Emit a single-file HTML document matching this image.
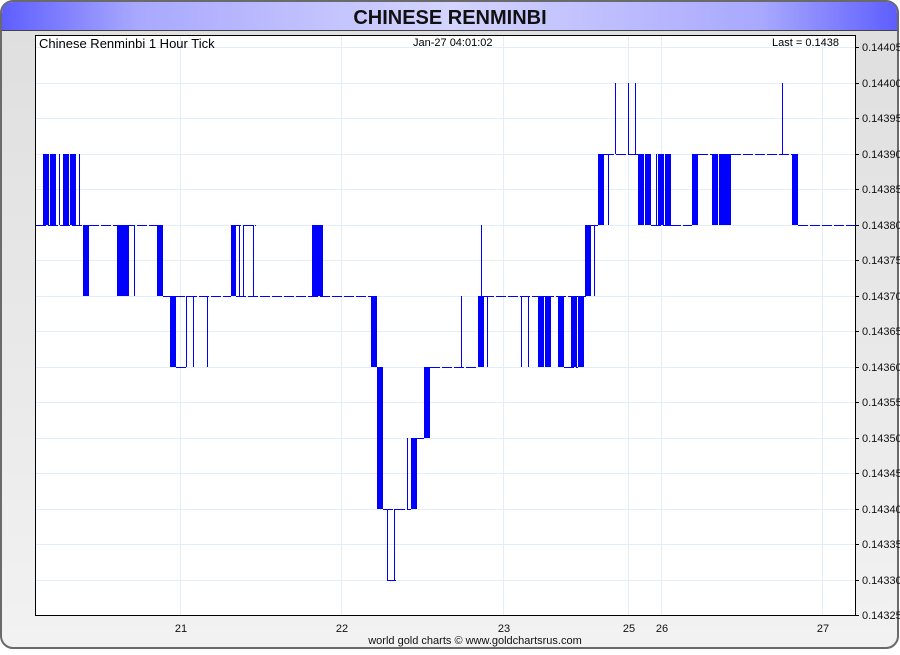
<!DOCTYPE html>
<html><head><style>
body{margin:0;width:900px;height:650px;overflow:hidden;background:#fff;font-family:"Liberation Sans",sans-serif}
</style></head><body>
<svg width="900" height="650" xmlns="http://www.w3.org/2000/svg" font-family="Liberation Sans, sans-serif">
<defs>
<linearGradient id="tb" x1="0" x2="1" y1="0" y2="0">
<stop offset="0" stop-color="#5e5eff"/><stop offset="0.15" stop-color="#a8a8ff"/><stop offset="0.5" stop-color="#d4d4ff"/><stop offset="0.85" stop-color="#a8a8ff"/><stop offset="1" stop-color="#5e5eff"/>
</linearGradient>
<linearGradient id="bg" x1="0" x2="0" y1="0" y2="1">
<stop offset="0" stop-color="#dedede"/><stop offset="1" stop-color="#f2f2f2"/>
</linearGradient>
</defs>
<rect x="1" y="1" width="897" height="647" rx="12" fill="url(#bg)" stroke="#6a6a6a" stroke-width="2"/>
<path d="M2 30 V14 Q2 2 14 2 H886 Q897 2 897 14 V30 Z" fill="url(#tb)"/>
<line x1="2" y1="30.5" x2="897" y2="30.5" stroke="#444" stroke-width="1"/>
<text x="450" y="24" text-anchor="middle" font-size="20" font-weight="bold" fill="#111">CHINESE RENMINBI</text>
<rect x="35.5" y="35.5" width="820" height="580" fill="#fff" stroke="#000" stroke-width="1"/>
<g stroke="#e2eef8" stroke-width="1">
<line x1="36" x2="855" y1="47.5" y2="47.5"/><line x1="36" x2="855" y1="83.5" y2="83.5"/><line x1="36" x2="855" y1="118.5" y2="118.5"/><line x1="36" x2="855" y1="154.5" y2="154.5"/><line x1="36" x2="855" y1="189.5" y2="189.5"/><line x1="36" x2="855" y1="225.5" y2="225.5"/><line x1="36" x2="855" y1="260.5" y2="260.5"/><line x1="36" x2="855" y1="296.5" y2="296.5"/><line x1="36" x2="855" y1="331.5" y2="331.5"/><line x1="36" x2="855" y1="367.5" y2="367.5"/><line x1="36" x2="855" y1="402.5" y2="402.5"/><line x1="36" x2="855" y1="438.5" y2="438.5"/><line x1="36" x2="855" y1="473.5" y2="473.5"/><line x1="36" x2="855" y1="509.5" y2="509.5"/><line x1="36" x2="855" y1="544.5" y2="544.5"/><line x1="36" x2="855" y1="580.5" y2="580.5"/>
<line x1="180.5" x2="180.5" y1="36" y2="615"/><line x1="341.5" x2="341.5" y1="36" y2="615"/><line x1="503.5" x2="503.5" y1="36" y2="615"/><line x1="628.5" x2="628.5" y1="36" y2="615"/><line x1="661.5" x2="661.5" y1="36" y2="615"/><line x1="822.5" x2="822.5" y1="36" y2="615"/>
</g>
<text x="39" y="48" font-size="13" fill="#000">Chinese Renminbi 1 Hour Tick</text>
<text x="413" y="46" font-size="11" fill="#000">Jan-27  04:01:02</text>
<text x="772" y="46" font-size="11" fill="#000">Last = 0.1438</text>
<g fill="#0000ff">
<rect x="43" y="154" width="6" height="71"/><rect x="50" y="154" width="6" height="71"/><rect x="59" y="154" width="1" height="71"/><rect x="63" y="154" width="6" height="71"/><rect x="70" y="154" width="6" height="71"/><rect x="79" y="154" width="1" height="71"/>
<rect x="83" y="225" width="6" height="71"/><rect x="117" y="225" width="12" height="71"/><rect x="134" y="225" width="1" height="71"/><rect x="157" y="225" width="6" height="71"/>
<rect x="231" y="225" width="5" height="71"/><rect x="239" y="225" width="1" height="71"/><rect x="243" y="225" width="1" height="71"/><rect x="253" y="225" width="1" height="71"/><rect x="312" y="225" width="11" height="71"/>
<rect x="170" y="296" width="6" height="71"/><rect x="186" y="296" width="1" height="71"/><rect x="193" y="296" width="1" height="71"/><rect x="207" y="296" width="1" height="71"/>
<rect x="371" y="296" width="6" height="71"/>
<rect x="377" y="367" width="6" height="142"/>
<rect x="387" y="509" width="1" height="71"/><rect x="394" y="509" width="1" height="71"/>
<rect x="407" y="438" width="1" height="71"/><rect x="411" y="438" width="6" height="71"/>
<rect x="424" y="367" width="6" height="71"/>
<rect x="461" y="296" width="1" height="71"/><rect x="478" y="296" width="6" height="71"/><rect x="487" y="296" width="1" height="71"/><rect x="481" y="225" width="1" height="71"/>
<rect x="521" y="296" width="1" height="71"/><rect x="528" y="296" width="1" height="71"/>
<rect x="538" y="296" width="6" height="71"/><rect x="545" y="296" width="6" height="71"/><rect x="558" y="296" width="6" height="71"/><rect x="571" y="296" width="6" height="71"/><rect x="578" y="296" width="6" height="71"/>
<rect x="585" y="225" width="6" height="71"/><rect x="594" y="225" width="1" height="71"/>
<rect x="598" y="154" width="6" height="71"/><rect x="608" y="154" width="1" height="71"/>
<rect x="615" y="83" width="1" height="71"/><rect x="628" y="83" width="1" height="71"/><rect x="635" y="83" width="1" height="71"/>
<rect x="638" y="154" width="6" height="71"/><rect x="645" y="154" width="6" height="71"/><rect x="656" y="154" width="1" height="71"/><rect x="658" y="154" width="6" height="71"/><rect x="665" y="154" width="6" height="71"/>
<rect x="692" y="154" width="6" height="71"/><rect x="712" y="154" width="6" height="71"/><rect x="719" y="154" width="12" height="71"/>
<rect x="782" y="83" width="1" height="71"/><rect x="792" y="154" width="6" height="71"/>
</g>
<g stroke="#0000ff" stroke-width="1" stroke-dasharray="10,2">
<line x1="36" x2="83" y1="225.5" y2="225.5"/><line x1="89" x2="157" y1="225.5" y2="225.5"/>
<line x1="163" x2="231" y1="296.5" y2="296.5"/><line x1="176" x2="188" y1="367.5" y2="367.5"/>
<line x1="231" x2="256" y1="225.5" y2="225.5"/><line x1="236" x2="372" y1="296.5" y2="296.5"/>
<line x1="383" x2="411" y1="509.5" y2="509.5"/><line x1="387" x2="396" y1="580.5" y2="580.5"/>
<line x1="417" x2="424" y1="438.5" y2="438.5"/><line x1="430" x2="478" y1="367.5" y2="367.5"/>
<line x1="484" x2="586" y1="296.5" y2="296.5"/><line x1="564" x2="578" y1="367.5" y2="367.5"/>
<line x1="591" x2="598" y1="225.5" y2="225.5"/><line x1="604" x2="640" y1="154.5" y2="154.5"/>
<line x1="671" x2="692" y1="225.5" y2="225.5"/><line x1="698" x2="712" y1="154.5" y2="154.5"/>
<line x1="731" x2="795" y1="154.5" y2="154.5"/><line x1="798" x2="855" y1="225.5" y2="225.5"/>
<line x1="651" x2="671" y1="225.5" y2="225.5"/>
</g>
<g stroke="#000" stroke-width="1">
<line x1="855" x2="859" y1="47.5" y2="47.5"/><line x1="855" x2="859" y1="83.5" y2="83.5"/><line x1="855" x2="859" y1="118.5" y2="118.5"/><line x1="855" x2="859" y1="154.5" y2="154.5"/><line x1="855" x2="859" y1="189.5" y2="189.5"/><line x1="855" x2="859" y1="225.5" y2="225.5"/><line x1="855" x2="859" y1="260.5" y2="260.5"/><line x1="855" x2="859" y1="296.5" y2="296.5"/><line x1="855" x2="859" y1="331.5" y2="331.5"/><line x1="855" x2="859" y1="367.5" y2="367.5"/><line x1="855" x2="859" y1="402.5" y2="402.5"/><line x1="855" x2="859" y1="438.5" y2="438.5"/><line x1="855" x2="859" y1="473.5" y2="473.5"/><line x1="855" x2="859" y1="509.5" y2="509.5"/><line x1="855" x2="859" y1="544.5" y2="544.5"/><line x1="855" x2="859" y1="580.5" y2="580.5"/><line x1="855" x2="859" y1="615.5" y2="615.5"/>
</g>
<g font-size="11" fill="#111">
<text x="862" y="51">0.14405</text><text x="862" y="87">0.14400</text><text x="862" y="122">0.14395</text><text x="862" y="158">0.14390</text><text x="862" y="193">0.14385</text><text x="862" y="229">0.14380</text><text x="862" y="264">0.14375</text><text x="862" y="300">0.14370</text><text x="862" y="335">0.14365</text><text x="862" y="371">0.14360</text><text x="862" y="406">0.14355</text><text x="862" y="442">0.14350</text><text x="862" y="477">0.14345</text><text x="862" y="513">0.14340</text><text x="862" y="548">0.14335</text><text x="862" y="584">0.14330</text><text x="862" y="619">0.14325</text>
</g>
<g font-size="11" fill="#111" text-anchor="middle">
<text x="181" y="632">21</text><text x="342" y="632">22</text><text x="504" y="632">23</text><text x="629" y="632">25</text><text x="662" y="632">26</text><text x="823" y="632">27</text>
</g>
<text x="475" y="644" font-size="11" fill="#111" text-anchor="middle">world gold charts © www.goldchartsrus.com</text>
</svg>
</body></html>
